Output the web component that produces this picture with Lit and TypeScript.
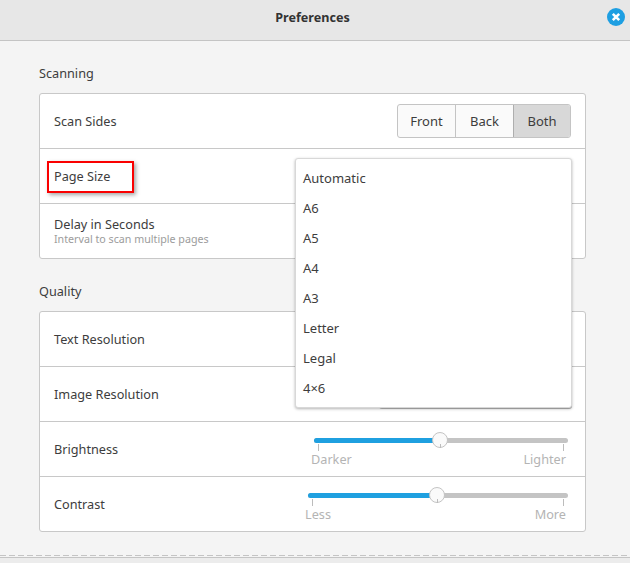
import { LitElement, html, css } from "lit";
import { customElement } from "lit/decorators.js";

@customElement("app-root")
export class AppRoot extends LitElement {
  static styles = css`
    :host {
      display: flex;
      flex-direction: column;
      position: relative;
      width: 630px;
      height: 563px;
      overflow: hidden;
      background: #f4f4f4;
      color: #3d3d3d;
      font-family: "Noto Sans", "Open Sans", sans-serif;
      font-size: 12.7px;
    }
    .head {
      height: 40px;
      flex: none;
      box-sizing: content-box;
      background: #e7e7e7;
      border-bottom: 1px solid #c4c4c4;
      display: flex;
      align-items: center;
      justify-content: center;
      position: relative;
      font-weight: 700;
      font-size: 12.6px;
      color: #333;
      padding: 0 5px 0 0;
    }
    .title {
      margin-top: -6px;
    }
    .close {
      position: absolute;
      right: 5px;
      top: 8px;
      width: 18px;
      height: 18px;
    }
    .body {
      flex: 1;
      padding: 23px 44px 0 39px;
    }
    h2 {
      margin: 0;
      font-weight: 400;
      font-size: 12.7px;
      line-height: 18px;
      height: 29px;
    }
    .card {
      background: #fff;
      border: 1px solid #c8c8c8;
      border-radius: 3px;
      margin-bottom: 23px;
    }
    .row {
      height: 54px;
      border-top: 1px solid #c8c8c8;
      display: flex;
      align-items: center;
      justify-content: space-between;
      padding: 0 14px;
    }
    .row:first-child {
      border-top: 0;
    }
    .sub {
      font-size: 10.7px;
      color: #9c9c9c;
      line-height: 14px;
    }
    .lbl {
      line-height: 15px;
      padding-top: 1px;
    }
    .seg {
      display: flex;
      height: 32px;
      border: 1px solid #c4c4c4;
      border-radius: 3px;
      overflow: hidden;
      background: #fafafa;
      font-size: 13px;
    }
    .seg span {
      width: 57px;
      display: flex;
      align-items: center;
      justify-content: center;
      border-left: 1px solid #c4c4c4;
    }
    .seg span:first-child {
      border-left: 0;
    }
    .seg .on {
      width: 56px;
      background: #d8d8d8;
      border-left-color: #aeaeae;
    }
    .slider {
      align-self: flex-start;
      margin: 16px 3px 0 0;
    }
    .track {
      height: 5px;
      border-radius: 3px;
      background: #c4c4c4;
      position: relative;
    }
    .fill {
      height: 100%;
      background: #1fa0e0;
      border-radius: 3px 0 0 3px;
    }
    .thumb {
      position: absolute;
      top: -6px;
      width: 16px;
      height: 16px;
      border-radius: 50%;
      box-sizing: border-box;
      background: #fafafa;
      border: 1px solid #c4c4c4;
    }
    .ticks {
      height: 6px;
      margin-top: 1px;
      position: relative;
    }
    .tick {
      position: absolute;
      width: 1px;
      top: 0;
      height: 7px;
      background: #bcbcbc;
    }
    .tick.mid {
      height: 4px;
    }
    .ends {
      display: flex;
      justify-content: space-between;
      color: #b4b4b4;
      line-height: 15px;
      margin: 2px 2px 0 -3px;
    }
    .foot {
      flex: none;
      height: 8px;
      box-sizing: border-box;
      padding-top: 1px;
      background: repeating-linear-gradient(90deg, #c4c4c4 0 6px, transparent 6px 9px) top / 100% 1px no-repeat;
    }
    .foot::after {
      content: "";
      display: block;
      height: 6px;
      margin-top: 1px;
      border-top: 1px solid #c4c4c4;
      background: #ececec;
    }
    .menu {
      position: absolute;
      left: 295px;
      top: 158px;
      width: 277px;
      height: 250px;
      box-sizing: border-box;
      background: #fff;
      border: 1px solid #d8d8d8;
      border-radius: 3px;
      box-shadow: 0 1px 3px rgba(0, 0, 0, 0.3);
      padding: 4px 0;
      font-size: 13px;
    }
    .menu div {
      height: 30px;
      line-height: 30px;
      padding-left: 7px;
    }
    .under {
      position: absolute;
      left: 379px;
      top: 403px;
      width: 193px;
      height: 6px;
      background: #bdbdbd;
      border-radius: 0 0 3px 3px;
    }
    .mark {
      position: absolute;
      left: 47px;
      top: 161px;
      width: 87px;
      height: 32px;
      box-sizing: border-box;
      border: 2px solid #fa0000;
      box-shadow: 2px 2px 4px rgba(0, 0, 0, 0.35);
    }
  `;

  private slider(width: number, pos: number, lo: string, hi: string) {
    return html`<div class="slider" style="width:${width}px">
      <div class="track">
        <div class="fill" style="width:${pos}px"></div>
        <div class="thumb" style="left:${pos - 8}px"></div>
      </div>
      <div class="ticks">
        <i class="tick" style="left:4px"></i>
        <i class="tick mid" style="left:${pos}px"></i>
        <i class="tick" style="right:4px"></i>
      </div>
      <div class="ends"><span>${lo}</span><span>${hi}</span></div>
    </div>`;
  }

  render() {
    return html`
      <div class="head">
        <span class="title">Preferences</span>
        <svg class="close" viewBox="0 0 18 18">
          <circle cx="9" cy="9" r="9" fill="#1e9fe2" />
          <path d="M5.8 5.8 12.2 12.2M12.2 5.8 5.8 12.2" stroke="#fff" stroke-width="2.6" />
        </svg>
      </div>
      <div class="body">
        <h2>Scanning</h2>
        <div class="card">
          <div class="row">
            <span>Scan Sides</span>
            <div class="seg"><span>Front</span><span>Back</span><span class="on">Both</span></div>
          </div>
          <div class="row"><span>Page Size</span></div>
          <div class="row">
            <div><div class="lbl">Delay in Seconds</div><div class="sub">Interval to scan multiple pages</div></div>
          </div>
        </div>
        <h2>Quality</h2>
        <div class="card">
          <div class="row"><span>Text Resolution</span></div>
          <div class="row"><span>Image Resolution</span></div>
          <div class="row"><span>Brightness</span>${this.slider(254, 126, "Darker", "Lighter")}</div>
          <div class="row"><span>Contrast</span>${this.slider(260, 129, "Less", "More")}</div>
        </div>
      </div>
      <div class="foot"></div>
      <div class="under"></div>
      <div class="menu">
        ${["Automatic", "A6", "A5", "A4", "A3", "Letter", "Legal", "4×6"].map((t) => html`<div>${t}</div>`)}
      </div>
      <div class="mark"></div>
    `;
  }
}
